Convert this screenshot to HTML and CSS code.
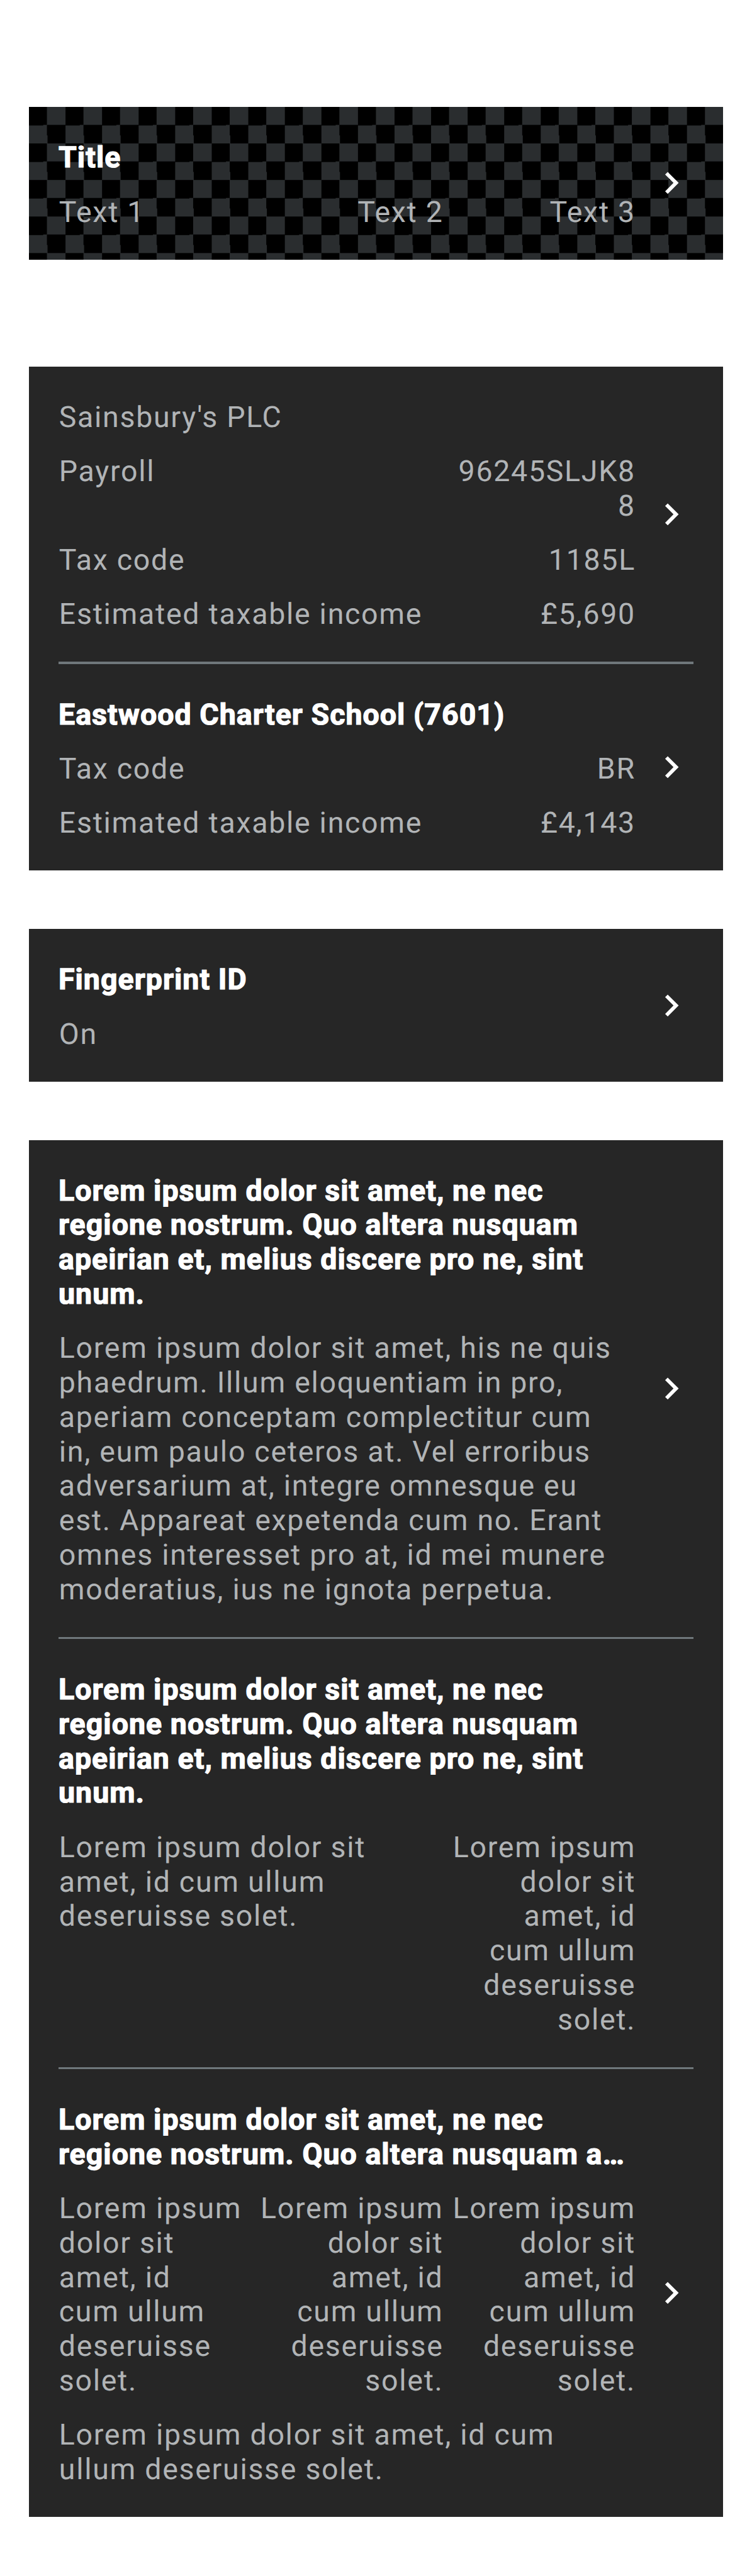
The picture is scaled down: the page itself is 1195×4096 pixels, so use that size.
FILE: index.html
```html
<!DOCTYPE html>
<html lang="en">
<head>
<meta charset="utf-8">
<title>Multi column rows</title>
<link rel="stylesheet" href="styles.css">
</head>
<body>
<svg class="defs" aria-hidden="true"><symbol id="chevron" viewBox="0 0 24 24"><path d="M10 6L8.59 7.41 13.17 12l-4.58 4.59L10 18l6-6z"/></symbol></svg>
<main class="page">
  <section class="card checker">
    <div class="item">
      <div class="content">
        <h2 class="text title">Title</h2>
        <div class="cols three"><p class="text">Text 1</p><p class="text">Text 2</p><p class="text">Text 3</p></div>
      </div>
      <svg class="chevron"><use href="#chevron"/></svg>
    </div>
  </section>

  <section class="card spaced">
    <div class="item">
      <div class="content">
        <p class="text">Sainsbury's PLC</p>
        <div class="cols two"><p class="text">Payroll</p><p class="text">96245SLJK8<br>8</p></div>
        <div class="cols two"><p class="text">Tax code</p><p class="text">1185L</p></div>
        <div class="cols two"><p class="text">Estimated taxable income</p><p class="text">£5,690</p></div>
      </div>
      <svg class="chevron"><use href="#chevron"/></svg>
    </div>
    <div class="divider"></div>
    <div class="item">
      <div class="content">
        <h2 class="text title">Eastwood Charter School (7601)</h2>
        <div class="cols two"><p class="text">Tax code</p><p class="text">BR</p></div>
        <div class="cols two"><p class="text">Estimated taxable income</p><p class="text">£4,143</p></div>
      </div>
      <svg class="chevron"><use href="#chevron"/></svg>
    </div>
  </section>

  <section class="card">
    <div class="item">
      <div class="content">
        <h2 class="text title">Fingerprint ID</h2>
        <p class="text">On</p>
      </div>
      <svg class="chevron"><use href="#chevron"/></svg>
    </div>
  </section>

  <section class="card">
    <div class="item">
      <div class="content">
        <h2 class="text title">Lorem ipsum dolor sit amet, ne nec<br>regione nostrum. Quo altera nusquam<br>apeirian et, melius discere pro ne, sint<br>unum.</h2>
        <p class="text">Lorem ipsum dolor sit amet, his ne quis<br>phaedrum. Illum eloquentiam in pro,<br>aperiam conceptam complectitur cum<br>in, eum paulo ceteros at. Vel erroribus<br>adversarium at, integre omnesque eu<br>est. Appareat expetenda cum no. Erant<br>omnes interesset pro at, id mei munere<br>moderatius, ius ne ignota perpetua.</p>
      </div>
      <svg class="chevron"><use href="#chevron"/></svg>
    </div>
    <div class="divider"></div>
    <div class="item">
      <div class="content">
        <h2 class="text title">Lorem ipsum dolor sit amet, ne nec<br>regione nostrum. Quo altera nusquam<br>apeirian et, melius discere pro ne, sint<br>unum.</h2>
        <div class="cols two">
          <p class="text">Lorem ipsum dolor sit<br>amet, id cum ullum<br>deseruisse solet.</p>
          <p class="text">Lorem ipsum<br>dolor sit<br>amet, id<br>cum ullum<br>deseruisse<br>solet.</p>
        </div>
      </div>
    </div>
    <div class="divider"></div>
    <div class="item">
      <div class="content">
        <h2 class="text title">Lorem ipsum dolor sit amet, ne nec<br>regione nostrum. Quo altera nusquam a…</h2>
        <div class="cols three">
          <p class="text">Lorem ipsum<br>dolor sit<br>amet, id<br>cum ullum<br>deseruisse<br>solet.</p>
          <p class="text">Lorem ipsum<br>dolor sit<br>amet, id<br>cum ullum<br>deseruisse<br>solet.</p>
          <p class="text">Lorem ipsum<br>dolor sit<br>amet, id<br>cum ullum<br>deseruisse<br>solet.</p>
        </div>
        <p class="text">Lorem ipsum dolor sit amet, id cum<br>ullum deseruisse solet.</p>
      </div>
      <svg class="chevron"><use href="#chevron"/></svg>
    </div>
  </section>
</main>
</body>
</html>
```
FILE: styles.css
```css
/* 1rem is 100 design pixels */
html { font-size: 83.012px; }
body {
  margin: 0;
  background: #fff;
  color: #b1b4b6;
  font-family: Roboto, "Liberation Sans", sans-serif;
  text-rendering: geometricPrecision;
}
.defs { display: none; }
.page {
  display: flex;
  flex-direction: column;
  gap: 1.12rem;
  padding: 2.05rem 0.56rem 1.12rem;
}
.card { background: #262626; }
.checker {
  background: repeating-conic-gradient(#2a2d2f 0 25%, #000 0 50%) 0 0 / 0.7rem 0.7rem;
}
.spaced { margin-top: 0.93rem; }
.item {
  display: flex;
  align-items: center;
  gap: 0.28rem;
  padding: 0.56rem;
}
.content {
  display: flex;
  flex-direction: column;
  gap: 0.28rem;
  width: 11.04rem;
  margin: 0 -0.01rem 0 0.01rem;
}
.cols { display: grid; }
.two { grid-template-columns: 2fr 1fr; }
.three { grid-template-columns: repeat(3, 1fr); }
.cols .text + .text { text-align: right; }
.text {
  margin: 0;
  padding: 0.092rem 0 0.008rem;
  font-size: 0.56rem;
  font-weight: 400;
  line-height: 0.66rem;
  letter-spacing: 0.037em;
  white-space: nowrap;
}
.title {
  margin-left: -0.01rem;
  color: #fff;
  font-weight: 700;
  letter-spacing: 0.0225em;
  -webkit-text-stroke: 0.026em #fff;
}
.divider {
  height: 0.04rem;
  margin: 0 0.56rem;
  background: #6f777b;
}
.chevron {
  flex: none;
  width: 0.84rem;
  height: 0.84rem;
  fill: #fff;
}
```
